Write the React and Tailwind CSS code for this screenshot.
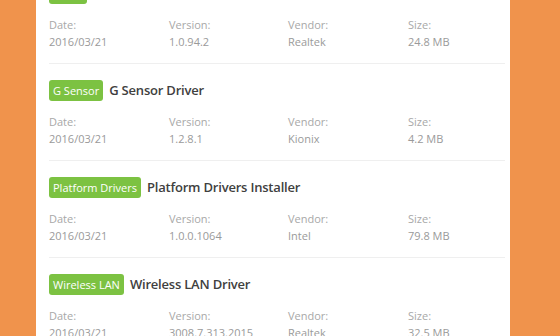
import React from "react";

const items = [
  { tag: "Audio", title: "Realtek Audio Driver", date: "2016/03/21", version: "1.0.94.2", vendor: "Realtek", size: "24.8 MB" },
  { tag: "G Sensor", title: "G Sensor Driver", date: "2016/03/21", version: "1.2.8.1", vendor: "Kionix", size: "4.2 MB" },
  { tag: "Platform Drivers", title: "Platform Drivers Installer", date: "2016/03/21", version: "1.0.0.1064", vendor: "Intel", size: "79.8 MB" },
  { tag: "Wireless LAN", title: "Wireless LAN Driver", date: "2016/03/21", version: "3008.7.313.2015", vendor: "Realtek", size: "32.5 MB" },
];

function Field({ label, value }) {
  return (
    <div className="flex flex-col">
      <span className="text-[11px] leading-[16px] text-[#a8a8a8]">{label}</span>
      <span className="mt-[1px] text-[11px] leading-[16px] text-[#9a9a9a]">{value}</span>
    </div>
  );
}

export default function App() {
  return (
    <div
      className="w-[560px] h-[336px] overflow-hidden bg-[#f0934c]"
      style={{ fontFamily: '"Open Sans", "Noto Sans", sans-serif' }}
    >
      <div className="ml-[36px] w-[474px] h-full bg-white pl-[13px] pr-[5px] overflow-hidden">
        <div className="-mt-[34px]">
          {items.map((it) => (
            <div key={it.title} className="border-t border-[#efefef] pt-[16px] pb-[13px]">
              <div className="flex items-center h-[21px] gap-[6px]">
                <span className="h-[21px] flex items-center px-[4px] rounded-[3px] bg-[#7cc242] text-white text-[11px] leading-none">
                  {it.tag}
                </span>
                <span className="text-[13px] font-semibold tracking-[-0.2px] text-[#404040] leading-none">{it.title}</span>
              </div>
              <div className="mt-[13px] grid grid-cols-[120px_119px_120px_1fr]">
                <Field label="Date:" value={it.date} />
                <Field label="Version:" value={it.version} />
                <Field label="Vendor:" value={it.vendor} />
                <Field label="Size:" value={it.size} />
              </div>
            </div>
          ))}
        </div>
      </div>
    </div>
  );
}
